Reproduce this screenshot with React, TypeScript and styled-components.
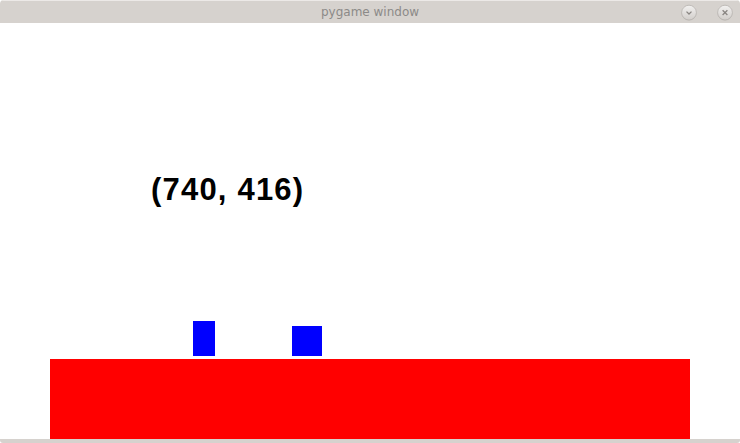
import React from "react";
import styled, { createGlobalStyle } from "styled-components";

const GlobalStyle = createGlobalStyle`
  html, body {
    margin: 0;
    padding: 0;
    background: #ffffff;
  }
`;

const Window = styled.div`
  width: 740px;
  height: 443px;
  display: flex;
  flex-direction: column;
  background: #d6d2ce;
  border-radius: 4px 4px 3px 3px;
  overflow: hidden;
`;

const TitleBar = styled.div`
  height: 23px;
  flex-shrink: 0;
  position: relative;
  display: flex;
  align-items: center;
  justify-content: center;
  border-top: 1px solid #ece9e7;
  box-sizing: border-box;
`;

const Title = styled.span`
  font-family: "DejaVu Sans", sans-serif;
  font-size: 12px;
  color: #8c8a88;
  margin-top: -1px;
`;

const Controls = styled.div`
  position: absolute;
  right: 7px;
  top: 3px;
  display: flex;
  gap: 20px;
`;

const Surface = styled.div`
  height: 416px;
  flex-shrink: 0;
  background: #ffffff;
  display: flex;
  flex-direction: column;
`;

const Label = styled.div`
  margin: 151px 0 0 151px;
  font-family: "Liberation Sans", Arial, sans-serif;
  font-weight: 700;
  font-size: 31px;
  line-height: 31px;
  letter-spacing: 1.2px;
  color: #000000;
`;

const PlayerRow = styled.div`
  margin-top: auto;
  margin-bottom: 3px;
  padding-left: 193px;
  display: flex;
  align-items: flex-end;
  gap: 77px;
`;

const Player = styled.div<{ $w: number; $h: number }>`
  width: ${(p) => p.$w}px;
  height: ${(p) => p.$h}px;
  background: #0000ff;
`;

const Ground = styled.div`
  margin-left: 50px;
  width: 640px;
  height: 80px;
  background: #ff0000;
`;

const WinButton = ({ kind }: { kind: "min" | "close" }) => (
  <svg width="16" height="17" viewBox="0 0 16 17">
    <defs>
      <linearGradient id={`g-${kind}`} x1="0" y1="0" x2="0" y2="1">
        <stop offset="0" stopColor="#f2f1f0" />
        <stop offset="1" stopColor="#d2cecb" />
      </linearGradient>
    </defs>
    <circle cx="8" cy="9" r="7.4" fill="#c4c0bc" />
    <circle cx="8" cy="8.6" r="7.4" fill={`url(#g-${kind})`} stroke="#b8b4b0" strokeWidth="0.8" />
    {kind === "min" ? (
      <path d="M5.5 7.6 L8 10 L10.5 7.6" fill="none" stroke="#8a8683" strokeWidth="1.3" />
    ) : (
      <path d="M5.6 6.2 L10.4 11 M10.4 6.2 L5.6 11" fill="none" stroke="#8a8683" strokeWidth="1.3" />
    )}
  </svg>
);

export default function App() {
  return (
    <>
      <GlobalStyle />
      <Window>
        <TitleBar>
          <Title>pygame window</Title>
          <Controls>
            <WinButton kind="min" />
            <WinButton kind="close" />
          </Controls>
        </TitleBar>
        <Surface>
          <Label>(740, 416)</Label>
          <PlayerRow>
            <Player $w={22} $h={35} />
            <Player $w={30} $h={30} />
          </PlayerRow>
          <Ground />
        </Surface>
      </Window>
    </>
  );
}
